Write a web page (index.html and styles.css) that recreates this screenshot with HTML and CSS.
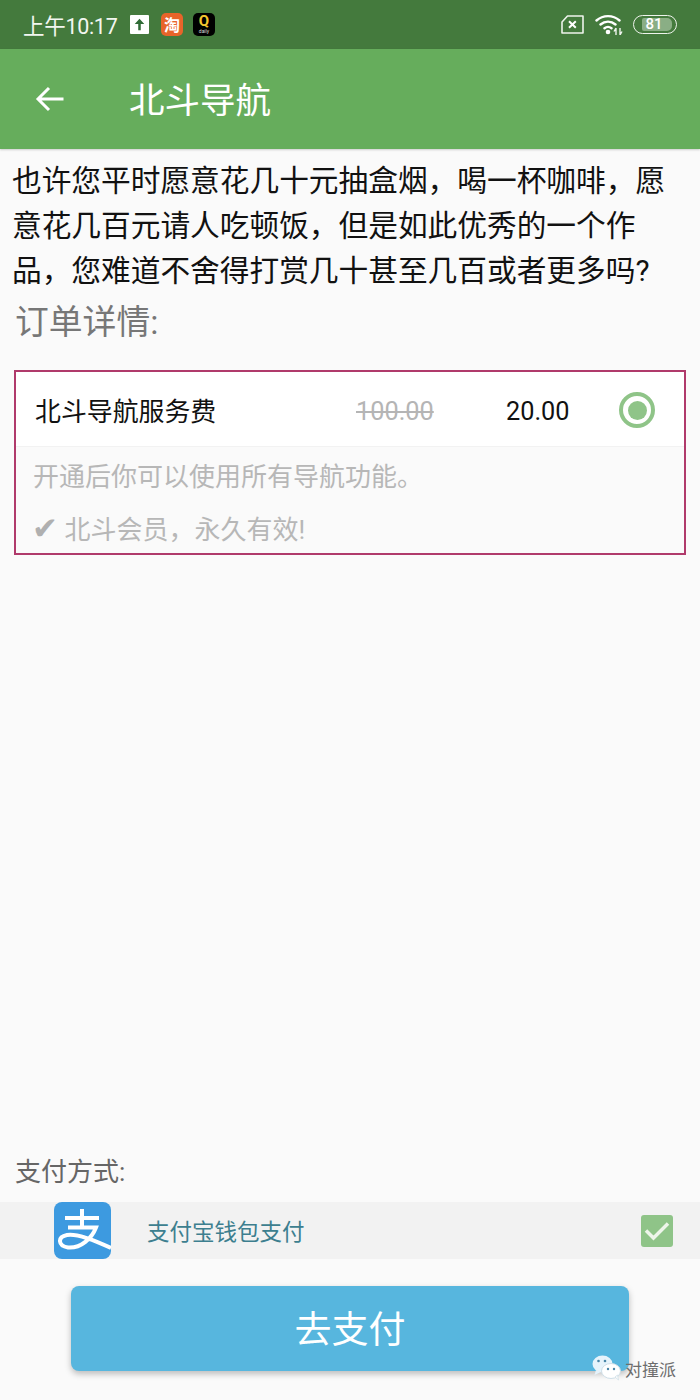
FILE: index.html
```html
<!DOCTYPE html>
<html lang="zh">
<head>
<meta charset="utf-8">
<title>北斗导航</title>
<link rel="stylesheet" href="styles.css">
</head>
<body>
<div class="screen">
  <div class="statusbar">
    <span class="time">上午10:17</span>
    <span class="notif notif-up"><svg width="19" height="19" viewBox="0 0 18 18"><path d="M9 3.500 L13.500 8.500 L10.200 8.500 L10.200 14.500 L7.800 14.500 L7.800 8.500 L4.500 8.500 Z" fill="#2f6b36"/></svg></span>
    <span class="notif notif-tao">淘</span>
    <span class="notif notif-q"><span class="q-letter">Q</span><span class="q-sub">daily</span></span>
    <span class="status-right">
      <svg class="ic-sim" width="23" height="19" viewBox="0 0 23 19"><path d="M6.500 1 H22 V18 H1 V7 Z" fill="none" stroke="#eef3ec" stroke-width="1.600" stroke-linejoin="round"/><path d="M8 6.200 L14.800 12.800 M14.800 6.200 L8 12.800" stroke="#fff" stroke-width="2"/></svg>
      <svg class="ic-wifi" width="28" height="21" viewBox="0 0 28 21"><path d="M1.500 6.500 C8 0.600 18 0.600 24.500 6.500 M5.500 10.500 C10 6.600 16 6.600 20.500 10.500 M9.500 14.300 C11.600 12.600 14.400 12.600 16.500 14.300" fill="none" stroke="#fff" stroke-width="2.400" stroke-linecap="round"/><circle cx="13" cy="18" r="2.300" fill="#fff"/><path d="M21 14 V21 M21 14 L19 17.500 M25 14 V21 M25 21 L27 17.500" stroke="#eef3ec" stroke-width="1.400" fill="none"/></svg>
      <span class="battery"><span class="battery-fill"></span><span class="battery-num">81</span></span>
    </span>
  </div>
  <header class="appbar">
    <svg class="back" width="30" height="30" viewBox="0 0 30 30"><path d="M28.500 15 H3 M14 4 L3 15 L14 26" fill="none" stroke="#fff" stroke-width="3"/></svg>
    <h1 class="title">北斗导航</h1>
  </header>
  <main class="content">
    <p class="pitch">也许您平时愿意花几十元抽盒烟，喝一杯咖啡，愿意花几百元请人吃顿饭，但是如此优秀的一个作品，您难道不舍得打赏几十甚至几百或者更多吗?</p>
    <h2 class="order-heading">订单详情:</h2>
    <section class="card">
      <div class="card-top">
        <span class="item-name">北斗导航服务费</span>
        <span class="old-price">100.00</span>
        <span class="price">20.00</span>
        <span class="radio"><span class="radio-dot"></span></span>
      </div>
      <div class="card-bottom">
        <p class="desc">开通后你可以使用所有导航功能。</p>
        <p class="desc"><span class="tick">✔</span> 北斗会员，永久有效!</p>
      </div>
    </section>
    <div class="spacer"></div>
    <div class="pay-label">支付方式:</div>
    <div class="pay-row">
      <svg class="alipay" width="57" height="57" viewBox="0 0 57 57">
        <rect width="57" height="57" rx="8" fill="#3d9ae0"/>
        <path d="M11 16 H45 M28 7 V25 M14 25.500 H42 C38 36 27 46.500 14 45.500 C4 44 3 35 13 33 C23 31 42 39 57 46" fill="none" stroke="#fff" stroke-width="4"/>
      </svg>
      <span class="pay-name">支付宝钱包支付</span>
      <span class="checkbox"><svg width="32" height="32" viewBox="0 0 32 32"><path d="M5 15.500 L12.500 23 L27 8.500" fill="none" stroke="#eef5ea" stroke-width="3.500"/></svg></span>
    </div>
    <div class="pay-action"><button class="pay-btn">去支付</button></div>
  </main>
  <div class="watermark">
    <svg width="30" height="26" viewBox="0 0 30 26">
      <ellipse cx="10.500" cy="9" rx="10" ry="8.500" fill="#e6f3fb"/>
      <path d="M4 15 L2.500 20 L9 17 Z" fill="#e6f3fb"/>
      <ellipse cx="19" cy="16" rx="9.500" ry="7.500" fill="#fff" stroke="#cfdfe8" stroke-width="1"/>
      <path d="M23 22 L26.500 25 L25.500 20 Z" fill="#fff" stroke="#cfdfe8" stroke-width=".8"/>
      <circle cx="6.500" cy="6" r="1.300" fill="#4a86a8"/><circle cx="13" cy="6" r="1.300" fill="#4a86a8"/>
      <circle cx="16" cy="14" r="1.200" fill="#4a86a8"/><circle cx="22" cy="14" r="1.200" fill="#4a86a8"/>
    </svg>
    <span class="wm-text">对撞派</span>
  </div>
</div>
</body>
</html>
```
FILE: styles.css
```css
* { box-sizing: border-box; }
html, body { margin: 0; padding: 0; }
body { font-family: "Roboto", "Noto Sans CJK SC", sans-serif; background: #fafafa; }
.screen { position: relative; width: 700px; height: 1400px; display: flex; flex-direction: column; overflow: hidden; background: #fafafa; }

.statusbar { flex: 0 0 49px; height: 49px; background: #447a3d; display: flex; align-items: center; padding: 0 0 1px 23px; color: #f2f6f0; }
.time { font-size: 21.500px; width: 107px; letter-spacing: -0.300px; }
.notif { display: flex; align-items: center; justify-content: center; width: 20px; height: 20px; margin-right: 13px; }
.notif-up { background: #fff; width: 19px; height: 19px; margin-right: 12px; border-radius: 1px; }
.notif-tao { width: 22px; height: 23px; background: #e8642a; border-radius: 5px; color: #fff; font-size: 16px; font-weight: 700; margin-right: 10px; }
.notif-q { width: 22px; height: 23px; background: #000; border-radius: 5px; flex-direction: column; line-height: 1; }
.q-letter { color: #f3c62e; font-size: 15px; font-weight: 700; line-height: 15px; }
.q-sub { color: #ddd; font-size: 5px; line-height: 5px; }
.status-right { margin-left: auto; display: flex; align-items: center; padding-right: 23px; }
.ic-sim { margin-right: 11px; }
.ic-wifi { margin-right: 10px; margin-top: 1px; }
.battery { position: relative; width: 44px; height: 19px; border: 1.500px solid #eef3ec; border-radius: 10px; display: flex; align-items: center; justify-content: center; overflow: hidden; }
.battery-fill { position: absolute; left: 8px; top: 2px; bottom: 2px; width: 30px; background: #8aae85; border-radius: 2px 5px 5px 2px; }
.battery-num { position: relative; color: #fff; font-size: 15px; font-weight: 500; margin-right: 2px; }

.appbar { flex: 0 0 100px; height: 100px; background: #66ad5c; display: flex; align-items: center; box-shadow: 0 1px 2px rgba(0,0,0,.18); position: relative; padding-left: 35px; }
.back { flex: none; }
.title { margin: 5px 0 0 64px; font-size: 35.500px; font-weight: 400; color: #fff; line-height: 1; }

.content { flex: 1; display: flex; flex-direction: column; min-height: 0; }
.pitch { margin: 9px 0 0; padding: 0 12px; font-size: 29.700px; line-height: 45px; color: #111; }
.order-heading { margin: 10px 0 0; padding-left: 15px; font-size: 33.800px; line-height: 40px; font-weight: 400; color: #777; }

.card { margin: 27px 14px 0; height: 185px; border: 2px solid #b03a6b; background: #fafafa; }
.card-top { height: 75px; background: #fff; border-bottom: 1px solid #f2f2f2; display: flex; align-items: center; padding-left: 19px; }
.item-name { width: 321px; font-size: 25.900px; color: #111; }
.old-price { width: 150px; padding-top: 4px; font-size: 25.300px; color: #b5b5b5; text-decoration: line-through; }
.price { width: 113px; padding-top: 4px; font-size: 25.300px; color: #111; }
.radio { width: 36px; height: 36px; margin-top: 2px; border-radius: 50%; border: 4px solid #8fc488; display: flex; align-items: center; justify-content: center; }
.radio-dot { width: 19px; height: 19px; border-radius: 50%; background: #8fc488; }
.card-bottom { padding: 14px 0 0 17px; }
.desc { margin: 0 0 20px; font-size: 26px; line-height: 33px; color: #b7b7b7; }
.tick { color: #b0b0b0; font-size: 31px; line-height: 20px; margin-left: -1px; }

.spacer { flex: 1; }
.pay-label { padding-left: 15px; font-size: 26px; line-height: 33px; color: #666; }
.pay-row { margin-top: 13px; height: 57px; background: #f2f2f2; display: flex; align-items: center; padding-left: 54px; padding-right: 27px; }
.alipay { flex: none; }
.pay-name { margin: -2px 0 0 36px; font-size: 22.500px; color: #3d7f8f; }
.checkbox { margin-left: auto; width: 32px; height: 32px; background: #8fc488; border-radius: 3px; display: block; }
.checkbox svg { display: block; }
.pay-action { padding: 27px 71px 29px; }
.pay-btn { display: block; width: 558px; height: 85px; border: 0; border-radius: 8px; background: #57b6de; color: #fff; font-family: inherit; font-size: 37px; box-shadow: 0 3px 6px rgba(0,0,0,.25); padding: 0 0 4px; }

.watermark { position: absolute; left: 592px; top: 1354px; display: flex; align-items: center; gap: 3px; }
.wm-text { font-size: 17px; color: #6d6d6d; margin-top: 2px; }
```
